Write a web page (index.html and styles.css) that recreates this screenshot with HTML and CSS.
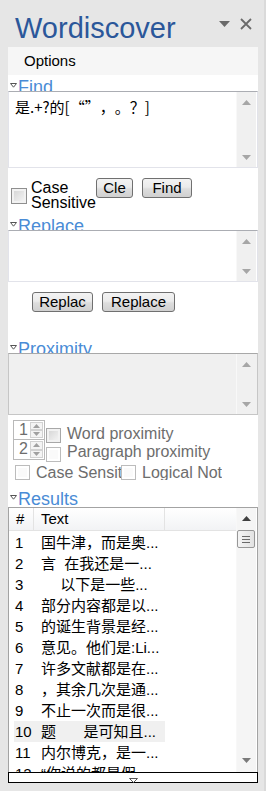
FILE: index.html
```html
<!DOCTYPE html>
<html lang="zh">
<head>
    <meta charset="UTF-8">
    <meta name="viewport" content="width=device-width, initial-scale=1.0">
    <title>Wordiscover</title>
    <link rel="stylesheet" href="styles.css">
</head>
<body>
    <div class="taskpane">
        <header class="pane-title">
            <h1>Wordiscover</h1>
            <div class="title-tools">
                <svg class="tool-menu" width="11" height="6" viewBox="0 0 11 6"><path d="M0 0H11L5.5 6Z" fill="#6a6a6a"/></svg>
                <svg class="tool-close" width="12" height="12" viewBox="0 0 12 12"><path d="M1 1L11 11M11 1L1 11" stroke="#6a6a6a" stroke-width="1.8"/></svg>
            </div>
        </header>

        <div class="pane-body">
            <div class="options-bar">Options</div>

            <!-- Find -->
            <div class="section-head">
                <svg width="7" height="5" viewBox="0 0 7 5"><path d="M0.5 0.5H6.5L3.5 4.2Z" fill="#fff" stroke="#555"/></svg>
                <span>Find</span>
            </div>
            <div class="textbox find-box">
                <div class="textbox-text">是.+?的[“”，。？]</div>
                <div class="vscroll">
                    <div class="sb-btn"><svg width="9" height="5" viewBox="0 0 9 5"><path d="M0 5H9L4.5 0Z" fill="#a6a6a6"/></svg></div>
                    <div class="sb-btn"><svg width="9" height="5" viewBox="0 0 9 5"><path d="M0 0H9L4.5 5Z" fill="#a6a6a6"/></svg></div>
                </div>
            </div>
            <div class="find-options">
                <label class="check-label">
                    <span class="checkbox"></span>
                    <span class="check-text">Case Sensitive</span>
                </label>
                <button class="btn btn-clear">Cle</button>
                <button class="btn btn-find">Find</button>
            </div>

            <!-- Replace -->
            <div class="section-head">
                <svg width="7" height="5" viewBox="0 0 7 5"><path d="M0.5 0.5H6.5L3.5 4.2Z" fill="#fff" stroke="#555"/></svg>
                <span>Replace</span>
            </div>
            <div class="textbox replace-box">
                <div class="textbox-text"></div>
                <div class="vscroll">
                    <div class="sb-btn"><svg width="9" height="5" viewBox="0 0 9 5"><path d="M0 5H9L4.5 0Z" fill="#a6a6a6"/></svg></div>
                    <div class="sb-btn"><svg width="9" height="5" viewBox="0 0 9 5"><path d="M0 0H9L4.5 5Z" fill="#a6a6a6"/></svg></div>
                </div>
            </div>
            <div class="replace-actions">
                <button class="btn btn-replace-one">Replac</button>
                <button class="btn btn-replace-all">Replace</button>
            </div>

            <!-- Proximity -->
            <div class="section-head">
                <svg width="7" height="5" viewBox="0 0 7 5"><path d="M0.5 0.5H6.5L3.5 4.2Z" fill="#fff" stroke="#555"/></svg>
                <span>Proximity</span>
            </div>
            <div class="textbox prox-box">
                <div class="textbox-text"></div>
                <div class="vscroll">
                    <div class="sb-btn"><svg width="9" height="5" viewBox="0 0 9 5"><path d="M0 5H9L4.5 0Z" fill="#a6a6a6"/></svg></div>
                    <div class="sb-btn"><svg width="9" height="5" viewBox="0 0 9 5"><path d="M0 0H9L4.5 5Z" fill="#a6a6a6"/></svg></div>
                </div>
            </div>
            <div class="prox-options">
                <div class="prox-row">
                    <div class="spinner">
                        <span class="spin-value">1</span>
                        <div class="spin-buttons">
                            <span class="spin-btn"><svg width="7" height="4" viewBox="0 0 7 4"><path d="M0 4H7L3.5 0Z" fill="#a0a0a0"/></svg></span>
                            <span class="spin-btn"><svg width="7" height="4" viewBox="0 0 7 4"><path d="M0 0H7L3.5 4Z" fill="#a0a0a0"/></svg></span>
                        </div>
                    </div>
                    <span class="checkbox small"></span>
                    <span class="prox-label">Word proximity</span>
                </div>
                <div class="prox-row second">
                    <div class="spinner joined">
                        <span class="spin-value">2</span>
                        <div class="spin-buttons">
                            <span class="spin-btn"><svg width="7" height="4" viewBox="0 0 7 4"><path d="M0 4H7L3.5 0Z" fill="#a0a0a0"/></svg></span>
                            <span class="spin-btn"><svg width="7" height="4" viewBox="0 0 7 4"><path d="M0 0H7L3.5 4Z" fill="#a0a0a0"/></svg></span>
                        </div>
                    </div>
                    <span class="checkbox small disabled"></span>
                    <span class="prox-label">Paragraph proximity</span>
                </div>
                <div class="flag-row">
                    <span class="checkbox small disabled"></span>
                    <span class="flag-label clip">Case Sensitive</span>
                    <span class="checkbox small disabled"></span>
                    <span class="flag-label">Logical Not</span>
                </div>
            </div>

            <!-- Results -->
            <div class="section-head head-results">
                <svg width="7" height="5" viewBox="0 0 7 5"><path d="M0.5 0.5H6.5L3.5 4.2Z" fill="#fff" stroke="#555"/></svg>
                <span>Results</span>
            </div>
            <div class="results">
                <div class="results-list">
                    <div class="results-head">
                        <span class="col-num">#</span>
                        <span class="col-text">Text</span>
                        <span class="col-rest"></span>
                    </div>
                    <div class="results-rows">
                        <div class="result-row"><span class="row-num">1</span><span class="row-text">国牛津，而是奥...</span></div>
                        <div class="result-row"><span class="row-num">2</span><span class="row-text">言  在我还是一...</span></div>
                        <div class="result-row"><span class="row-num">3</span><span class="row-text">　 以下是一些...</span></div>
                        <div class="result-row"><span class="row-num">4</span><span class="row-text">部分内容都是以...</span></div>
                        <div class="result-row"><span class="row-num">5</span><span class="row-text">的诞生背景是经...</span></div>
                        <div class="result-row"><span class="row-num">6</span><span class="row-text">意见。他们是:Li...</span></div>
                        <div class="result-row"><span class="row-num">7</span><span class="row-text">许多文献都是在...</span></div>
                        <div class="result-row"><span class="row-num">8</span><span class="row-text">，其余几次是通...</span></div>
                        <div class="result-row"><span class="row-num">9</span><span class="row-text">不止一次而是很...</span></div>
                        <div class="result-row selected"><span class="row-num">10</span><span class="row-text">题　   是可知且...</span></div>
                        <div class="result-row"><span class="row-num">11</span><span class="row-text">内尔博克，是一...</span></div>
                        <div class="result-row"><span class="row-num">12</span><span class="row-text">“你说的都是假...</span></div>
                    </div>
                </div>
                <div class="vscroll results-scroll">
                    <div class="sb-btn"><svg width="9" height="5" viewBox="0 0 9 5"><path d="M0 5H9L4.5 0Z" fill="#404040"/></svg></div>
                    <div class="sb-thumb"><i></i><i></i><i></i></div>
                    <div class="sb-track"></div>
                    <div class="sb-btn bottom"><svg width="9" height="5" viewBox="0 0 9 5"><path d="M0 0H9L4.5 5Z" fill="#7a7a7a"/></svg></div>
                </div>
            </div>
            <div class="results-footer">
                <svg width="9" height="5" viewBox="0 0 9 5"><path d="M0.5 0.5H8.5L4.5 4.5Z" fill="#fff" stroke="#555"/></svg>
            </div>
        </div>
    </div>
</body>
</html>
```

FILE: styles.css
```css
* {
    box-sizing: border-box;
}
body {
    margin: 0;
    width: 266px;
    height: 791px;
    overflow: hidden;
    background-color: #e6e6e6;
    font-family: "Liberation Sans", "Noto Sans CJK SC", sans-serif;
    font-size: 15px;
    color: #000;
    text-spacing-trim: space-all;
}
.taskpane {
    height: 791px;
    border-right: 2px solid #dadada;
}
.pane-title {
    display: flex;
    align-items: flex-start;
    height: 47px;
    padding: 9px 0 0 15px;
}
.pane-title h1 {
    margin: 0;
    font-size: 29px;
    font-weight: normal;
    line-height: 38px;
    color: #2b579a;
}
.title-tools {
    display: flex;
    align-items: flex-start;
    gap: 10px;
    margin-left: auto;
    margin-right: 12px;
    padding-top: 9px;
}
.tool-menu {
    margin-top: 3px;
}
.pane-body {
    width: 250px;
    margin: 0 8px;
    background-color: #fff;
}
.options-bar {
    height: 28px;
    line-height: 28px;
    padding-left: 16px;
    background-color: #f6f6f6;
}

/* collapsible section titles, clipped by the box below */
.section-head {
    display: flex;
    height: 16px;
    overflow: hidden;
    padding-left: 2px;
    font-size: 18px;
    line-height: 25px;
    color: #4a8cd6;
}
.section-head svg {
    flex: none;
    margin-top: 8px;
    margin-right: 1px;
}
.head-results {
    height: 20px;
}

/* text boxes */
.textbox {
    display: flex;
    border: 1px solid #e2e3ea;
    border-top-color: #abadb3;
}
.find-box {
    height: 77px;
}
.replace-box {
    height: 52px;
}
.prox-box {
    height: 62px;
    background-color: #f0f0f0;
    border-color: #c6c6c6;
    border-top-color: #a8a8a8;
}
.textbox-text {
    flex: 1;
    padding: 6px 0 0 6px;
    font-family: "Noto Sans CJK SC", sans-serif;
    font-size: 15px;
    line-height: 18px;
    white-space: pre;
}
.vscroll {
    flex: none;
    display: flex;
    flex-direction: column;
    justify-content: space-between;
    width: 20px;
    margin-right: 1px;
    background-color: #f0f0f0;
    border-left: 1px solid #f8f8f8;
}
.sb-btn {
    display: flex;
    align-items: center;
    justify-content: center;
    height: 20px;
}

/* checkboxes and buttons */
.checkbox {
    flex: none;
    display: inline-block;
    width: 16px;
    height: 16px;
    border: 1px solid #8f8f8f;
    background: linear-gradient(135deg, #d2d2d2, #f8f8f8);
    box-shadow: inset 0 0 0 2px #f2f2f2;
}
.checkbox.small {
    width: 15px;
    height: 15px;
    border-color: #a8a8a8;
}
.checkbox.disabled {
    border-color: #bcbcbc;
    background: #fafafa;
    box-shadow: inset 0 0 0 2px #fff;
}
.btn {
    height: 20px;
    padding: 0;
    border: 1px solid #707070;
    border-radius: 3px;
    background: linear-gradient(#f3f3f3, #ebebeb 45%, #dddddd 55%, #d0d0d0);
    font-family: "Liberation Sans", sans-serif;
    font-size: 15px;
    line-height: 18px;
    color: #000;
    white-space: nowrap;
    overflow: hidden;
}
.find-options {
    display: flex;
    align-items: flex-start;
    height: 46px;
    padding: 10px 0 0 3px;
}
.check-label {
    display: flex;
    align-items: center;
    margin-top: 2px;
}
.check-label .checkbox {
    margin-top: 2px;
}
.check-text {
    width: 65px;
    margin-left: 4px;
    font-size: 16px;
    line-height: 15px;
}
.btn-clear {
    width: 37px;
}
.btn-find {
    width: 50px;
    margin-left: 9px;
}
.replace-actions {
    display: flex;
    align-items: flex-start;
    gap: 9px;
    height: 55px;
    padding: 10px 0 0 24px;
}
.btn-replace-one {
    width: 61px;
}
.btn-replace-all {
    width: 73px;
}

/* proximity options */
.prox-options {
    height: 72px;
    padding: 5px 0 0 5px;
    font-size: 16px;
    color: #6d6d6d;
}
.prox-row {
    display: flex;
    align-items: flex-start;
    height: 20px;
}
.spinner {
    display: flex;
    width: 32px;
    height: 20px;
    border: 1px solid #b9b9b9;
}
.spinner.joined {
    border-top: 0;
}
.spin-value {
    flex: 1;
    padding-left: 5px;
    line-height: 18px;
}
.spin-buttons {
    display: flex;
    flex-direction: column;
    width: 13px;
    margin: 1px 1px 1px 0;
}
.spin-btn {
    flex: 1;
    display: flex;
    align-items: center;
    justify-content: center;
    border: 1px solid #d2d2d2;
    background-color: #f4f4f4;
}
.prox-row .checkbox {
    margin: 8px 0 0 1px;
}
.prox-row.second .checkbox {
    margin-top: 7px;
}
.prox-label {
    margin-left: 6px;
    padding-top: 4px;
    line-height: 19px;
    white-space: nowrap;
}
.prox-row.second .prox-label {
    padding-top: 1.5px;
}
.flag-row {
    display: flex;
    align-items: flex-start;
    margin-top: 5px;
    padding-left: 2px;
}
.flag-label {
    margin-left: 6px;
    line-height: 15px;
    white-space: nowrap;
    overflow: hidden;
}
.flag-label.clip {
    width: 85px;
}

/* results list */
.results {
    display: flex;
    height: 265px;
    border: 1px solid #a3a3a3;
    border-bottom: 0;
}
.results-list {
    flex: 1;
    overflow: hidden;
}
.results-head {
    display: flex;
    height: 23px;
    line-height: 22px;
    border-bottom: 1px solid #e3e3e3;
    background: linear-gradient(#fff, #f2f3f5);
}
.col-num {
    width: 25px;
    padding-left: 7px;
    border-right: 1px solid #e3e3e3;
}
.col-text {
    width: 131px;
    padding-left: 7px;
    border-right: 1px solid #e3e3e3;
}
.results-rows {
    padding: 1px 0 0 5px;
}
.result-row {
    display: flex;
    width: 151px;
    height: 21px;
    line-height: 21px;
    white-space: pre;
}
.result-row.selected {
    background-color: #f0f0f0;
}
.row-num {
    width: 20px;
    padding-left: 1px;
}
.row-text {
    padding-left: 7px;
}
.results-scroll {
    justify-content: flex-start;
    background-color: #f5f5f5;
}
.sb-thumb {
    display: flex;
    flex-direction: column;
    align-items: center;
    justify-content: center;
    gap: 2px;
    width: 18px;
    height: 18px;
    margin-top: 2px;
    border: 1px solid #979797;
    border-radius: 2px;
    background: linear-gradient(90deg, #f4f4f4, #e2e2e2);
}
.sb-thumb i {
    display: block;
    width: 8px;
    height: 1px;
    background-color: #6a6a6a;
}
.sb-track {
    flex: 1;
}
.sb-btn.bottom {
    margin-bottom: 2px;
}
.results-footer {
    display: flex;
    justify-content: center;
    height: 11px;
    padding-top: 5px;
    border: 1px solid #000;
}
.results-footer svg {
    display: block;
}
```
